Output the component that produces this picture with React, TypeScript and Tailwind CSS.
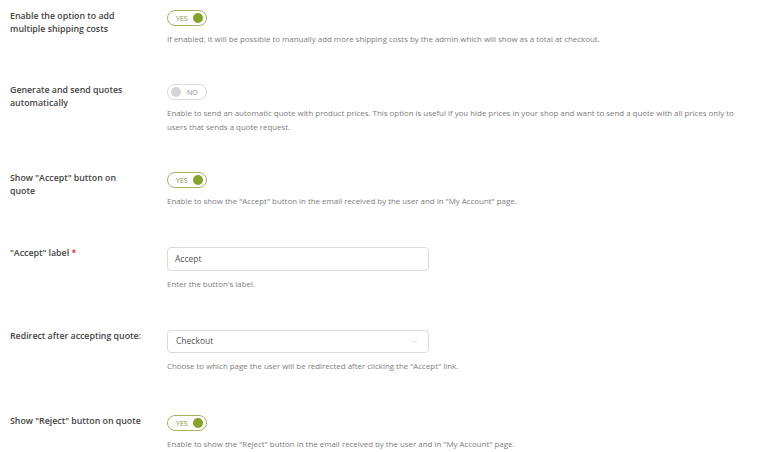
import { ChevronDown } from "lucide-react";

const font = { fontFamily: '"Open Sans", "Noto Sans", sans-serif' };

const Toggle = ({ on }: { on: boolean }) => {
  if (on) {
    return (
      <div className="flex h-[16px] w-[40px] items-center justify-between rounded-full border border-[#a3b35e] pl-[8px] pr-[3px]">
        <span className="text-[7px] leading-none text-[#7d8f3a]">YES</span>
        <span className="h-[10px] w-[10px] rounded-full bg-[#86a12c]" />
      </div>
    );
  }
  return (
    <div className="flex h-[16px] w-[40px] items-center gap-[6px] rounded-full border border-[#dadada] pl-[3px]">
      <span className="h-[10px] w-[10px] rounded-full bg-[#d6d6d6]" />
      <span className="text-[7px] leading-none text-[#8a8a8a]">NO</span>
    </div>
  );
};

const Row = ({
  label,
  children,
  desc,
  height,
}: {
  label: React.ReactNode;
  children: React.ReactNode;
  desc: React.ReactNode;
  height: string;
}) => (
  <div className={`flex ${height}`}>
    <div className="w-[157px] shrink-0 pr-[24px] pt-[0px] text-[8.8px] font-semibold leading-[12.5px] text-[#444]">
      {label}
    </div>
    <div className="flex flex-col">
      {children}
      <div className="mt-[6px] text-[7.9px] leading-[14px] text-[#7d7d7d]">{desc}</div>
    </div>
  </div>
);

export default function App() {
  return (
    <div className="h-[452px] w-[769px] overflow-hidden bg-white pl-[10px] pt-[10px]" style={font}>
      <Row
        height="h-[74px]"
        label="Enable the option to add multiple shipping costs"
        desc="If enabled, it will be possible to manually add more shipping costs by the admin which will show as a total at checkout."
      >
        <Toggle on />
      </Row>
      <Row
        height="h-[88px]"
        label="Generate and send quotes automatically"
        desc={
          <>
            Enable to send an automatic quote with product prices. This option is useful if you hide prices in your shop and want to send a quote with all prices only to
            <br />
            users that sends a quote request.
          </>
        }
      >
        <Toggle on={false} />
      </Row>
      <Row
        height="h-[75px]"
        label={'Show "Accept" button on quote'}
        desc={'Enable to show the "Accept" button in the email received by the user and in "My Account" page.'}
      >
        <Toggle on />
      </Row>
      <Row
        height="h-[83px]"
        label={
          <>
            "Accept" label <span className="text-[#d12a2a]">*</span>
          </>
        }
        desc="Enter the button's label."
      >
        <div className="flex h-[24px] w-[262px] items-center rounded-[4px] border border-[#dcdcdc] px-[7px] text-[8.5px] text-[#555]">
          Accept
        </div>
      </Row>
      <Row
        height="h-[85px]"
        label="Redirect after accepting quote:"
        desc={'Choose to which page the user will be redirected after clicking the "Accept" link.'}
      >
        <div className="flex h-[23px] w-[262px] items-center justify-between rounded-[4px] border border-[#dcdcdc] px-[8px] text-[8.5px] text-[#555]">
          <span>Checkout</span>
          <ChevronDown size={11} strokeWidth={1.2} className="text-[#c4c4c4]" />
        </div>
      </Row>
      <Row
        height="h-[40px]"
        label={'Show "Reject" button on quote'}
        desc={'Enable to show the "Reject" button in the email received by the user and in "My Account" page.'}
      >
        <Toggle on />
      </Row>
    </div>
  );
}
